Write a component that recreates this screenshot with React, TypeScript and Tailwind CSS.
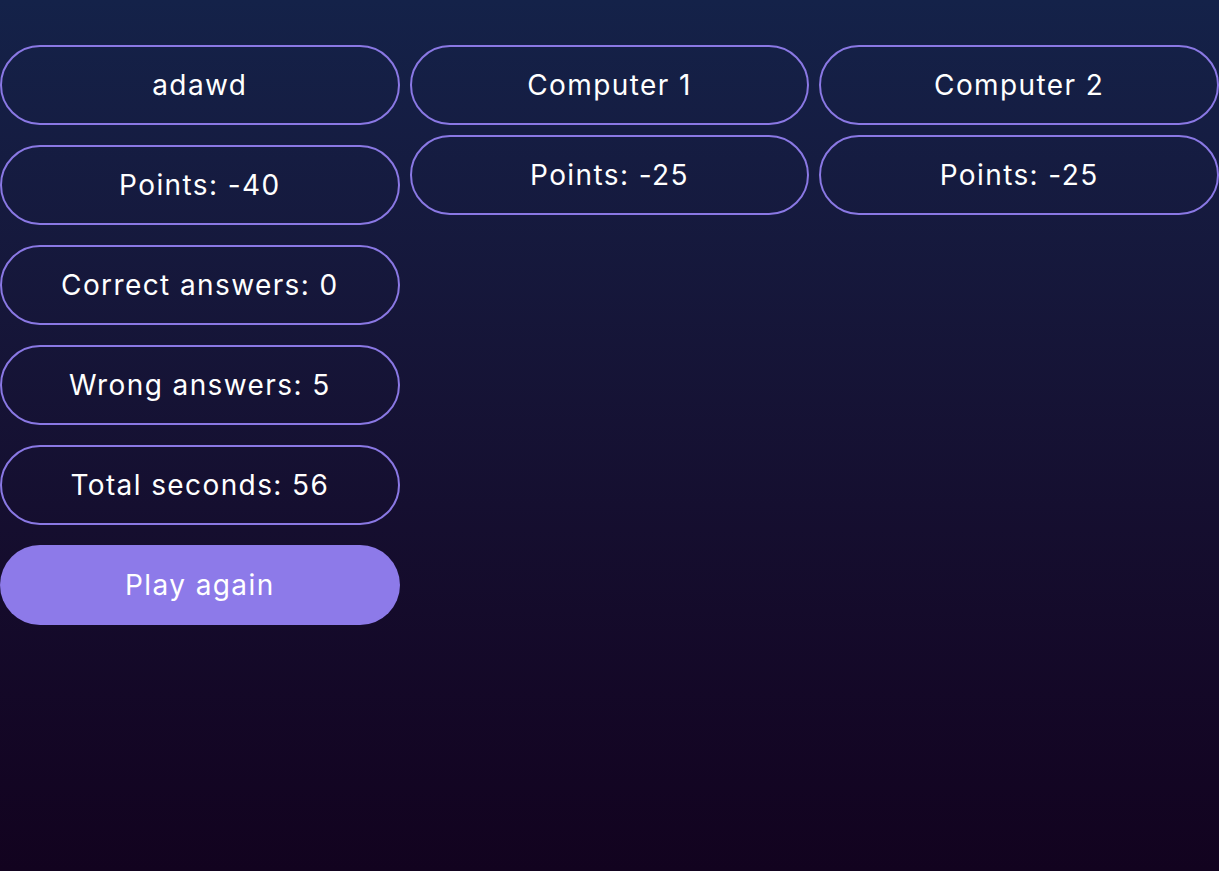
import React from 'react';

const Pill = ({ children }: { children: React.ReactNode }) => (
  <div className="h-[80px] w-full rounded-[40px] border-2 border-[#8a78e4] flex items-center justify-center text-white text-[28px] tracking-[1.4px]">
    {children}
  </div>
);

const App = () => {
  const players = [
    { name: 'Computer 1', points: -25 },
    { name: 'Computer 2', points: -25 },
  ];

  return (
    <div
      className="min-h-screen w-full bg-gradient-to-b from-[#142249] to-[#12031f] pt-[45px]"
      style={{ fontFamily: 'Inter, "Noto Sans", sans-serif' }}
    >
      <div className="grid grid-cols-3 gap-x-[10px] items-start">
        {/* Player column */}
        <div className="flex flex-col gap-[20px]">
          <Pill>adawd</Pill>
          <Pill>Points: -40</Pill>
          <Pill>Correct answers: 0</Pill>
          <Pill>Wrong answers: 5</Pill>
          <Pill>Total seconds: 56</Pill>
          <button className="h-[80px] w-full rounded-[40px] bg-[#8d7ae9] text-white text-[28px] tracking-[1.4px]">
            Play again
          </button>
        </div>

        {/* Computer columns */}
        {players.map((p) => (
          <div key={p.name} className="flex flex-col gap-[10px]">
            <Pill>{p.name}</Pill>
            <Pill>Points: {p.points}</Pill>
          </div>
        ))}
      </div>
    </div>
  );
};

export default App;
